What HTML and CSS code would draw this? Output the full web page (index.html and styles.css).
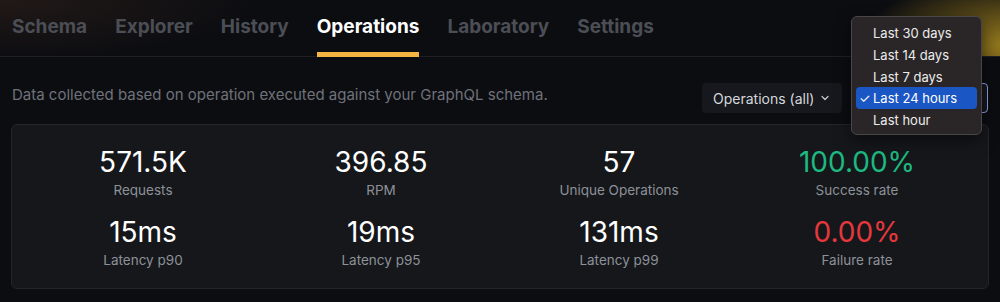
FILE: index.html
```html
<!DOCTYPE html>
<html lang="en">
<head>
    <meta charset="UTF-8">
    <meta name="viewport" content="width=device-width, initial-scale=1.0">
    <title>Operations</title>
    <link rel="stylesheet" href="styles.css">
</head>
<body>
    <nav class="tabs">
        <a class="tab">Schema</a>
        <a class="tab">Explorer</a>
        <a class="tab">History</a>
        <a class="tab active">Operations</a>
        <a class="tab">Laboratory</a>
        <a class="tab">Settings</a>
    </nav>

    <main class="content">
        <div class="toolbar">
            <p class="description">Data collected based on operation executed against your GraphQL schema.</p>
            <div class="controls">
                <button class="filter-btn">
                    Operations (all)
                    <svg class="chevron" width="10" height="10" viewBox="0 0 10 10">
                        <path d="M2 3.5 L5 6.5 L8 3.5" fill="none" stroke="#c9cbd0" stroke-width="1.2" stroke-linecap="round" stroke-linejoin="round"/>
                    </svg>
                </button>
                <div class="period-select">
                    <ul class="period-menu">
                        <li>Last 30 days</li>
                        <li>Last 14 days</li>
                        <li>Last 7 days</li>
                        <li class="selected"><span class="check">✓</span>Last 24 hours</li>
                        <li>Last hour</li>
                    </ul>
                </div>
            </div>
        </div>

        <section class="stats">
            <div class="stat">
                <div class="value">571.5K</div>
                <div class="label">Requests</div>
            </div>
            <div class="stat">
                <div class="value">396.85</div>
                <div class="label">RPM</div>
            </div>
            <div class="stat">
                <div class="value">57</div>
                <div class="label">Unique Operations</div>
            </div>
            <div class="stat">
                <div class="value success">100.00%</div>
                <div class="label">Success rate</div>
            </div>
            <div class="stat">
                <div class="value">15ms</div>
                <div class="label">Latency p90</div>
            </div>
            <div class="stat">
                <div class="value">19ms</div>
                <div class="label">Latency p95</div>
            </div>
            <div class="stat">
                <div class="value">131ms</div>
                <div class="label">Latency p99</div>
            </div>
            <div class="stat">
                <div class="value failure">0.00%</div>
                <div class="label">Failure rate</div>
            </div>
        </section>
    </main>
</body>
</html>
```

FILE: styles.css
```css
body {
    margin: 0;
    height: 302px;
    overflow: hidden;
    font-family: Inter, "Noto Sans", sans-serif;
    color: #fff;
    background-color: #0c0d11;
}
.tabs {
    display: flex;
    gap: 28px;
    height: 57px;
    padding: 0 12px;
    border-bottom: 1px solid #1f2026;
    box-sizing: border-box;
    background-image:
        radial-gradient(ellipse 150px 70px at 1010px 45px, rgba(160, 130, 30, 0.95), rgba(160, 130, 30, 0) 100%),
        radial-gradient(ellipse 260px 60px at 0 0, rgba(60, 40, 30, 0.45), rgba(60, 40, 30, 0) 100%);
}
.tab {
    display: flex;
    align-items: center;
    padding-top: 1px;
    font-size: 19px;
    font-weight: 700;
    color: #4c4e56;
    border-bottom: 5px solid transparent;
    margin-bottom: -1px;
}
.tab.active {
    color: #fff;
    border-bottom-color: #f4b63f;
}
.content {
    padding: 0 11px;
}
.toolbar {
    display: flex;
    justify-content: space-between;
    align-items: flex-start;
    height: 67px;
    padding-top: 26px;
    box-sizing: border-box;
}
.description {
    margin: 3px 0 0 1px;
    font-size: 15px;
    line-height: 18px;
    color: #6f727a;
}
.controls {
    display: flex;
    gap: 9px;
    margin-right: 1px;
}
.filter-btn {
    display: flex;
    align-items: center;
    gap: 6px;
    height: 30px;
    width: 140px;
    padding: 0 0 0 11px;
    border: none;
    border-radius: 4px;
    background: #16181d;
    color: #d5d7db;
    font-family: inherit;
    font-size: 14px;
}
/* closed select sits behind its open menu */
.period-select {
    position: relative;
    width: 137px;
    height: 30px;
    border: 1px solid #8ea0e8;
    border-radius: 4px;
    box-sizing: border-box;
    background: #16181d;
}
.period-menu {
    position: absolute;
    top: -68px;
    left: -1px;
    width: 131px;
    margin: 0;
    padding: 5px 4px 3px;
    list-style: none;
    box-sizing: border-box;
    background: #2a2628;
    border: 1px solid #4a4548;
    border-radius: 6px;
    box-shadow: 0 6px 16px rgba(0, 0, 0, 0.5);
    font-size: 13px;
    color: #ececec;
}
.period-menu li {
    position: relative;
    height: 21.8px;
    line-height: 22px;
    padding-left: 17px;
    border-radius: 4px;
}
.period-menu li.selected {
    background: #1a56c4;
    color: #fff;
}
.check {
    position: absolute;
    left: 3px;
}
.stats {
    display: grid;
    grid-template-columns: repeat(4, 1fr);
    row-gap: 16px;
    padding: 20px 12px 19px;
    background: #15171b;
    border: 1px solid #23252b;
    border-radius: 6px;
}
.stat {
    text-align: center;
}
.value {
    font-size: 28px;
    line-height: 34px;
}
.value.success {
    color: #1db980;
}
.value.failure {
    color: #e5383d;
}
.label {
    margin-top: 2px;
    font-size: 13.5px;
    line-height: 18px;
    color: #8e9198;
}
```
